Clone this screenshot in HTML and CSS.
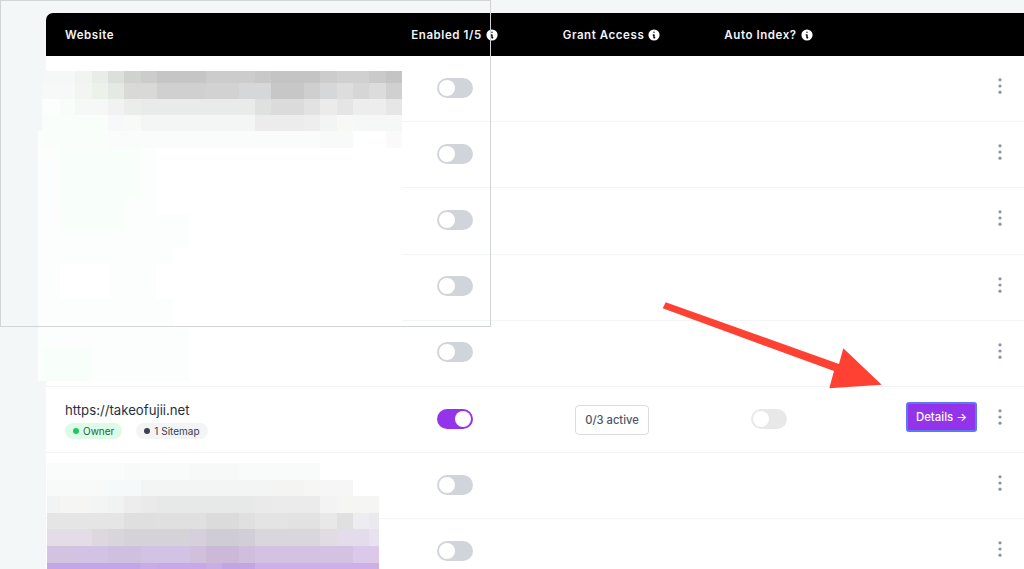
FILE: index.html
```html
<!DOCTYPE html>
<html lang="en">

<head>
    <meta charset="UTF-8">
    <meta name="viewport" content="width=device-width, initial-scale=1.0">
    <title>Websites</title>
    <link rel="stylesheet" href="styles.css">
</head>

<body>
    <div class="sites-card">
        <div class="sites-row sites-head">
            <div class="col-site">Website</div>
            <div class="col-center">Enabled 1/5 <svg class="info" viewBox="0 0 20 20"><path fill-rule="evenodd" d="M18 10a8 8 0 11-16 0 8 8 0 0116 0zm-7-4a1 1 0 11-2 0 1 1 0 012 0zM9 9a1 1 0 000 2v3a1 1 0 001 1h1a1 1 0 100-2v-3a1 1 0 00-1-1H9z"/></svg></div>
            <div class="col-center">Grant Access <svg class="info" viewBox="0 0 20 20"><path fill-rule="evenodd" d="M18 10a8 8 0 11-16 0 8 8 0 0116 0zm-7-4a1 1 0 11-2 0 1 1 0 012 0zM9 9a1 1 0 000 2v3a1 1 0 001 1h1a1 1 0 100-2v-3a1 1 0 00-1-1H9z"/></svg></div>
            <div class="col-center">Auto Index? <svg class="info" viewBox="0 0 20 20"><path fill-rule="evenodd" d="M18 10a8 8 0 11-16 0 8 8 0 0116 0zm-7-4a1 1 0 11-2 0 1 1 0 012 0zM9 9a1 1 0 000 2v3a1 1 0 001 1h1a1 1 0 100-2v-3a1 1 0 00-1-1H9z"/></svg></div>
            <div></div>
        </div>

        <div class="sites-row">
            <div class="col-site"></div>
            <div class="col-center"><span class="toggle"></span></div>
            <div></div>
            <div></div>
            <div class="col-actions"><svg class="dots" viewBox="0 0 20 20"><circle cx="10" cy="3.8" r="1.6"/><circle cx="10" cy="10" r="1.6"/><circle cx="10" cy="16.2" r="1.6"/></svg></div>
        </div>
        <div class="sites-row">
            <div class="col-site"></div>
            <div class="col-center"><span class="toggle"></span></div>
            <div></div>
            <div></div>
            <div class="col-actions"><svg class="dots" viewBox="0 0 20 20"><circle cx="10" cy="3.8" r="1.6"/><circle cx="10" cy="10" r="1.6"/><circle cx="10" cy="16.2" r="1.6"/></svg></div>
        </div>
        <div class="sites-row">
            <div class="col-site"></div>
            <div class="col-center"><span class="toggle"></span></div>
            <div></div>
            <div></div>
            <div class="col-actions"><svg class="dots" viewBox="0 0 20 20"><circle cx="10" cy="3.8" r="1.6"/><circle cx="10" cy="10" r="1.6"/><circle cx="10" cy="16.2" r="1.6"/></svg></div>
        </div>
        <div class="sites-row">
            <div class="col-site"></div>
            <div class="col-center"><span class="toggle"></span></div>
            <div></div>
            <div></div>
            <div class="col-actions"><svg class="dots" viewBox="0 0 20 20"><circle cx="10" cy="3.8" r="1.6"/><circle cx="10" cy="10" r="1.6"/><circle cx="10" cy="16.2" r="1.6"/></svg></div>
        </div>
        <div class="sites-row">
            <div class="col-site"></div>
            <div class="col-center"><span class="toggle"></span></div>
            <div></div>
            <div></div>
            <div class="col-actions"><svg class="dots" viewBox="0 0 20 20"><circle cx="10" cy="3.8" r="1.6"/><circle cx="10" cy="10" r="1.6"/><circle cx="10" cy="16.2" r="1.6"/></svg></div>
        </div>

        <div class="sites-row">
            <div class="col-site site-cell">
                <div class="site-url">https://takeofujii.net</div>
                <div class="site-tags">
                    <span class="tag tag-owner"><i class="tag-dot"></i>Owner</span>
                    <span class="tag tag-sitemap"><i class="tag-dot"></i>1 Sitemap</span>
                </div>
            </div>
            <div class="col-center"><span class="toggle toggle-on"></span></div>
            <div class="col-center"><span class="chip">0/3 active</span></div>
            <div class="col-center"><span class="toggle toggle-off"></span></div>
            <div class="col-actions">
                <span class="details-btn">Details →</span>
                <svg class="dots" viewBox="0 0 20 20"><circle cx="10" cy="3.8" r="1.6"/><circle cx="10" cy="10" r="1.6"/><circle cx="10" cy="16.2" r="1.6"/></svg>
            </div>
        </div>

        <div class="sites-row">
            <div class="col-site"></div>
            <div class="col-center"><span class="toggle"></span></div>
            <div></div>
            <div></div>
            <div class="col-actions"><svg class="dots" viewBox="0 0 20 20"><circle cx="10" cy="3.8" r="1.6"/><circle cx="10" cy="10" r="1.6"/><circle cx="10" cy="16.2" r="1.6"/></svg></div>
        </div>
        <div class="sites-row">
            <div class="col-site"></div>
            <div class="col-center"><span class="toggle"></span></div>
            <div></div>
            <div></div>
            <div class="col-actions"><svg class="dots" viewBox="0 0 20 20"><circle cx="10" cy="3.8" r="1.6"/><circle cx="10" cy="10" r="1.6"/><circle cx="10" cy="16.2" r="1.6"/></svg></div>
        </div>
    </div>

    <!-- pixelated parts of the screenshot, they lie over the rows -->
    <svg class="overlay" viewBox="0 0 1024 569" shape-rendering="crispEdges">
        <rect x="46" y="71" width="356" height="310" fill="#fff"/>
        <rect x="38" y="131" width="8" height="250" fill="#fbfefc"/>

        <rect x="42" y="71" width="33" height="12" fill="#f6f8f8"/>
        <rect x="75" y="71" width="17" height="12" fill="#f1f4f0"/>
        <rect x="92" y="71" width="16" height="12" fill="#e9ede8"/>
        <rect x="108" y="71" width="16" height="12" fill="#dcdfdc"/>
        <rect x="124" y="71" width="17" height="12" fill="#d0d2d0"/>
        <rect x="141" y="71" width="16" height="12" fill="#cbcccb"/>
        <rect x="157" y="71" width="49" height="12" fill="#c4c5c4"/>
        <rect x="206" y="71" width="49" height="12" fill="#cccccc"/>
        <rect x="255" y="71" width="16" height="12" fill="#c8c8c8"/>
        <rect x="271" y="71" width="49" height="12" fill="#c3c4c3"/>
        <rect x="320" y="71" width="17" height="12" fill="#cbcccb"/>
        <rect x="337" y="71" width="32" height="12" fill="#d0d0d0"/>
        <rect x="369" y="71" width="17" height="12" fill="#cacaca"/>
        <rect x="386" y="71" width="16" height="12" fill="#c4c4c4"/>

        <rect x="42" y="83" width="33" height="16" fill="#f7f9f9"/>
        <rect x="75" y="83" width="17" height="16" fill="#f3f5f2"/>
        <rect x="92" y="83" width="16" height="16" fill="#ecf1ea"/>
        <rect x="108" y="83" width="16" height="16" fill="#e4e9e3"/>
        <rect x="124" y="83" width="33" height="16" fill="#d9dad8"/>
        <rect x="157" y="83" width="49" height="16" fill="#cfd0cf"/>
        <rect x="206" y="83" width="33" height="16" fill="#d2d2d2"/>
        <rect x="239" y="83" width="32" height="16" fill="#d6d7d8"/>
        <rect x="271" y="83" width="33" height="16" fill="#c6c7c6"/>
        <rect x="304" y="83" width="16" height="16" fill="#cfcfcf"/>
        <rect x="320" y="83" width="17" height="16" fill="#d6d7d8"/>
        <rect x="337" y="83" width="16" height="16" fill="#dddddd"/>
        <rect x="353" y="83" width="16" height="16" fill="#d6d6d6"/>
        <rect x="369" y="83" width="17" height="16" fill="#dcdcdc"/>
        <rect x="386" y="83" width="16" height="16" fill="#d0d0d0"/>

        <rect x="42" y="99" width="18" height="16" fill="#fcfefd"/>
        <rect x="60" y="99" width="15" height="16" fill="#f8fdfa"/>
        <rect x="75" y="99" width="33" height="16" fill="#f6f8f8"/>
        <rect x="108" y="99" width="16" height="16" fill="#f1f2f1"/>
        <rect x="124" y="99" width="17" height="16" fill="#ebedea"/>
        <rect x="141" y="99" width="114" height="16" fill="#e9eaea"/>
        <rect x="255" y="99" width="16" height="16" fill="#dfe0e0"/>
        <rect x="271" y="99" width="33" height="16" fill="#dbdbdb"/>
        <rect x="304" y="99" width="16" height="16" fill="#e2e2e2"/>
        <rect x="320" y="99" width="17" height="16" fill="#ebebeb"/>
        <rect x="337" y="99" width="16" height="16" fill="#e5e5e5"/>
        <rect x="353" y="99" width="33" height="16" fill="#ededed"/>
        <rect x="386" y="99" width="16" height="16" fill="#e6e6e6"/>

        <rect x="42" y="115" width="66" height="16" fill="#fafefb"/>
        <rect x="108" y="115" width="16" height="16" fill="#f6f8f9"/>
        <rect x="124" y="115" width="17" height="16" fill="#f9f9f7"/>
        <rect x="141" y="115" width="114" height="16" fill="#f4f6f5"/>
        <rect x="255" y="115" width="49" height="16" fill="#ececec"/>
        <rect x="304" y="115" width="16" height="16" fill="#eeeeee"/>
        <rect x="320" y="115" width="17" height="16" fill="#f3f5f4"/>
        <rect x="337" y="115" width="16" height="16" fill="#f8f8f5"/>
        <rect x="353" y="115" width="49" height="16" fill="#f6f8f7"/>

        <rect x="42" y="131" width="66" height="17" fill="#fafefb"/>
        <rect x="108" y="131" width="212" height="17" fill="#fafcfb"/>
        <rect x="320" y="131" width="33" height="17" fill="#f8f9f9"/>
        <rect x="386" y="131" width="16" height="17" fill="#fafafa"/>

        <rect x="38" y="148" width="119" height="67" fill="#fbfefc"/>
        <rect x="60" y="148" width="81" height="50" fill="#f8fffa"/>
        <rect x="60" y="198" width="65" height="32" fill="#f8fffa"/>
        <rect x="38" y="215" width="22" height="33" fill="#fbfefc"/>
        <rect x="125" y="215" width="65" height="33" fill="#fcfefd"/>
        <rect x="60" y="230" width="65" height="18" fill="#fbfefc"/>
        <rect x="38" y="248" width="135" height="16" fill="#fcfefd"/>
        <rect x="38" y="264" width="22" height="34" fill="#fcfefd"/>
        <rect x="110" y="264" width="46" height="34" fill="#fcfefd"/>
        <rect x="38" y="298" width="135" height="30" fill="#fbfefc"/>
        <rect x="38" y="328" width="152" height="53" fill="#fbfefc"/>
        <rect x="42" y="347" width="50" height="34" fill="#f8fefa"/>

        <rect x="47" y="463" width="332" height="106" fill="#fff"/>
        <rect x="47" y="463" width="77" height="17" fill="#fafbfb"/>
        <rect x="124" y="463" width="17" height="17" fill="#f8fafa"/>
        <rect x="141" y="463" width="49" height="17" fill="#f9fbfb"/>
        <rect x="190" y="463" width="49" height="17" fill="#f7f8f8"/>
        <rect x="239" y="463" width="81" height="17" fill="#f9fafa"/>

        <rect x="47" y="480" width="61" height="16" fill="#f8f9f9"/>
        <rect x="108" y="480" width="33" height="16" fill="#f6f9f9"/>
        <rect x="141" y="480" width="131" height="16" fill="#f3f5f4"/>
        <rect x="272" y="480" width="32" height="16" fill="#f4f4f2"/>
        <rect x="304" y="480" width="16" height="16" fill="#f6f6f3"/>
        <rect x="320" y="480" width="33" height="16" fill="#f5f6f5"/>

        <rect x="47" y="496" width="13" height="17" fill="#f2f4f3"/>
        <rect x="60" y="496" width="32" height="17" fill="#f5f6f3"/>
        <rect x="92" y="496" width="16" height="17" fill="#f3f5f5"/>
        <rect x="108" y="496" width="16" height="17" fill="#f1f3f3"/>
        <rect x="124" y="496" width="17" height="17" fill="#ecedec"/>
        <rect x="141" y="496" width="16" height="17" fill="#e9eae9"/>
        <rect x="157" y="496" width="98" height="17" fill="#e7e8e8"/>
        <rect x="255" y="496" width="17" height="17" fill="#e9eae9"/>
        <rect x="272" y="496" width="48" height="17" fill="#ebebeb"/>
        <rect x="320" y="496" width="17" height="17" fill="#f2f3f2"/>
        <rect x="337" y="496" width="16" height="17" fill="#f5f5f2"/>
        <rect x="353" y="496" width="26" height="17" fill="#f5f6f4"/>

        <rect x="47" y="513" width="77" height="16" fill="#e5e5e5"/>
        <rect x="124" y="513" width="33" height="16" fill="#dfdfdf"/>
        <rect x="157" y="513" width="49" height="16" fill="#e1e0e0"/>
        <rect x="206" y="513" width="33" height="16" fill="#dbdbdb"/>
        <rect x="239" y="513" width="16" height="16" fill="#e0e0e0"/>
        <rect x="255" y="513" width="33" height="16" fill="#e4e4e4"/>
        <rect x="288" y="513" width="32" height="16" fill="#e2e2e2"/>
        <rect x="320" y="513" width="17" height="16" fill="#e8e8e8"/>
        <rect x="337" y="513" width="16" height="16" fill="#e0e0e0"/>
        <rect x="353" y="513" width="16" height="16" fill="#edecf1"/>
        <rect x="369" y="513" width="10" height="16" fill="#eae9ed"/>

        <rect x="47" y="529" width="45" height="17" fill="#e4dde8"/>
        <rect x="92" y="529" width="16" height="17" fill="#ddd8dd"/>
        <rect x="108" y="529" width="16" height="17" fill="#d9d5da"/>
        <rect x="124" y="529" width="66" height="17" fill="#d6d3d8"/>
        <rect x="190" y="529" width="16" height="17" fill="#d6d0dc"/>
        <rect x="206" y="529" width="33" height="17" fill="#d0ccd6"/>
        <rect x="239" y="529" width="16" height="17" fill="#d2ced8"/>
        <rect x="255" y="529" width="65" height="17" fill="#dad6de"/>
        <rect x="320" y="529" width="17" height="17" fill="#e0dce4"/>
        <rect x="337" y="529" width="16" height="17" fill="#e4dcea"/>
        <rect x="353" y="529" width="16" height="17" fill="#e2dcec"/>
        <rect x="369" y="529" width="10" height="17" fill="#e8e2f0"/>

        <rect x="47" y="546" width="28" height="17" fill="#d2c3e0"/>
        <rect x="75" y="546" width="33" height="17" fill="#d2c2e4"/>
        <rect x="108" y="546" width="33" height="17" fill="#d0c0e0"/>
        <rect x="141" y="546" width="49" height="17" fill="#d2c2e4"/>
        <rect x="190" y="546" width="16" height="17" fill="#d0c0dc"/>
        <rect x="206" y="546" width="33" height="17" fill="#ccb9d8"/>
        <rect x="239" y="546" width="16" height="17" fill="#d0bedd"/>
        <rect x="255" y="546" width="98" height="17" fill="#d4c2e2"/>
        <rect x="353" y="546" width="26" height="17" fill="#dcc9ea"/>

        <rect x="47" y="563" width="93" height="6" fill="#c4a6e6"/>
        <rect x="140" y="563" width="17" height="6" fill="#c9abe8"/>
        <rect x="157" y="563" width="49" height="6" fill="#c8a8e6"/>
        <rect x="206" y="563" width="16" height="6" fill="#c9aee2"/>
        <rect x="222" y="563" width="33" height="6" fill="#c4a5e4"/>
        <rect x="255" y="563" width="124" height="6" fill="#ccb0e6"/>
    </svg>

    <div class="shot-frame"></div>

    <svg class="overlay" viewBox="0 0 1024 569">
        <polygon points="662.7,308.3 665.7,302.3 839,364 843.3,348.3 881.7,384.7 829.3,388.3 834,371" fill="#fe4133"/>
    </svg>
</body>

</html>
```

FILE: styles.css
```css
body {
    font-family: 'Inter', 'Liberation Sans', sans-serif;
    background-color: #f3f7f8;
    margin: 0;
    height: 569px;
    overflow: hidden;
    position: relative;
}

.sites-card {
    margin: 13px 0 0 46px;
    background-color: #fff;
    border-top-left-radius: 7px;
    overflow: hidden;
}

.sites-row {
    display: grid;
    grid-template-columns: 331px 156px 158px 156px 1fr;
    align-items: center;
    height: 66.2px;
    box-sizing: border-box;
    padding-bottom: 2px;
    border-bottom: 1px solid #f3f4f6;
}

.sites-head {
    height: 43px;
    padding-bottom: 0;
    background-color: #000;
    color: #f3f4f6;
    font-size: 11.5px;
    font-weight: 600;
    letter-spacing: 0.05em;
    border-bottom: none;
}

.col-site {
    padding-left: 19px;
}

.site-cell {
    margin-top: 3px;
}

.col-center {
    display: flex;
    align-items: center;
    justify-content: center;
}

.col-actions {
    display: flex;
    align-items: center;
    justify-content: flex-end;
    padding-right: 14px;
    margin-bottom: 3px;
}

.info {
    width: 14px;
    height: 14px;
    margin-left: 3px;
    fill: #fff;
}

.toggle {
    display: block;
    position: relative;
    width: 36px;
    height: 20px;
    background-color: #d1d5db;
    border-radius: 10px;
}

.toggle::after {
    content: "";
    position: absolute;
    top: 2px;
    left: 2px;
    width: 16px;
    height: 16px;
    background-color: #fff;
    border-radius: 50%;
}

.toggle-on {
    background-color: #9333ea;
}

.toggle-on::after {
    left: 18px;
}

.toggle-off {
    background-color: #e8e8e9;
}

.dots {
    width: 20px;
    height: 20px;
    fill: #8b93a1;
}

.site-url {
    font-size: 13.2px;
    color: #27303f;
    line-height: 18px;
}

.site-tags {
    display: flex;
    gap: 14px;
    margin-top: 4px;
}

.tag {
    display: flex;
    align-items: center;
    height: 16px;
    padding: 0 8px;
    font-size: 10px;
    font-weight: 400;
    border-radius: 8px;
}

.tag-dot {
    width: 6px;
    height: 6px;
    margin-right: 4px;
    border-radius: 50%;
}

.tag-owner {
    background-color: #dcfce7;
    color: #166534;
}

.tag-owner .tag-dot {
    background-color: #22c55e;
}

.tag-sitemap {
    background-color: #f3f4f6;
    color: #374151;
}

.tag-sitemap .tag-dot {
    background-color: #374151;
}

.chip {
    display: block;
    margin-top: 3px;
    padding: 7px 9.5px;
    font-size: 11.2px;
    line-height: 14px;
    font-weight: 500;
    color: #4b5563;
    background-color: #fff;
    border: 1px solid #d8dbe0;
    border-radius: 4px;
}

.details-btn {
    display: block;
    width: 71px;
    height: 30px;
    margin-right: 13px;
    box-sizing: border-box;
    text-align: center;
    font-size: 11.4px;
    font-weight: 500;
    line-height: 26px;
    color: #fff;
    background-color: #9333ea;
    border: 2px solid #5b78f5;
    border-radius: 3px;
}

.overlay {
    position: absolute;
    top: 0;
    left: 0;
    width: 1024px;
    height: 569px;
}

.shot-frame {
    position: absolute;
    top: 0;
    left: 0;
    width: 489px;
    height: 325px;
    border: 1.5px solid #d2d5d5;
}
```
